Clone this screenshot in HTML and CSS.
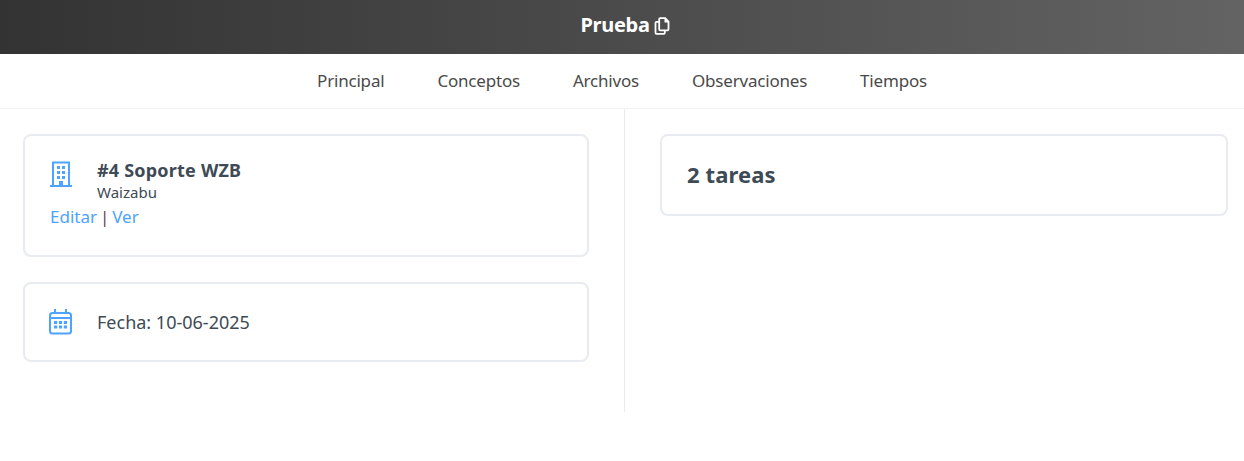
FILE: index.html
```html
<!DOCTYPE html>
<html lang="es">
<head>
    <meta charset="UTF-8">
    <title>Prueba</title>
    <link rel="stylesheet" href="styles.css">
</head>
<body>
    <header class="topbar">
        <span class="topbar-title">Prueba</span>
        <svg class="copy-icon" viewBox="0 0 16 18" width="16" height="18" fill="none" stroke="#fff" stroke-width="1.800">
            <path d="M6.200 1.200h5l3.300 3.300v7.800a1 1 0 0 1-1 1H6.200a1 1 0 0 1-1-1V2.200a1 1 0 0 1 1-1z"/>
            <path fill="#fff" stroke="none" d="M10.500 1.200h1l3 3v1.300h-4z"/>
            <path d="M5.200 4.800H2.500a1 1 0 0 0-1 1v10a1 1 0 0 0 1 1h7.300a1 1 0 0 0 1-1v-2.500"/>
        </svg>
    </header>

    <nav class="tabs">
        <a href="#">Principal</a>
        <a href="#">Conceptos</a>
        <a href="#">Archivos</a>
        <a href="#">Observaciones</a>
        <a href="#">Tiempos</a>
    </nav>

    <main class="content">
        <section class="col col-left">
            <div class="card card-project">
                <div class="card-row">
                    <svg class="card-icon" viewBox="0 0 22 26" width="22" height="26">
                        <path fill="none" stroke="#4da3ff" stroke-width="2" d="M3 25V1.500h16V25M0 25h22"/>
                        <path fill="#4da3ff" d="M7 5h3v3H7zM12 5h3v3h-3zM7 10h3v3H7zM12 10h3v3h-3zM7 15h3v3H7zM12 15h3v3h-3zM9 20h4v5H9z"/>
                    </svg>
                    <div class="project-text">
                        <div class="project-title">#4 Soporte WZB</div>
                        <div class="project-client">Waizabu</div>
                    </div>
                </div>
                <div class="links"><a href="#">Editar</a> | <a href="#">Ver</a></div>
            </div>

            <div class="card card-date">
                <svg class="card-icon" viewBox="0 0 23 26" width="23" height="26">
                    <rect x="1" y="4" width="21" height="20.500" rx="2.500" fill="none" stroke="#4da3ff" stroke-width="2"/>
                    <path fill="none" stroke="#4da3ff" stroke-width="2" d="M1 9h21M6 0v5M17 0v5"/>
                    <path fill="#4da3ff" d="M5 12h3.200v3H5zM9.900 12h3.200v3H9.900zM14.800 12h3.200v3h-3.200zM5 16.500h3.200v3H5zM9.900 16.500h3.200v3H9.900zM14.800 16.500h3.200v3h-3.200z"/>
                </svg>
                <span class="date-text">Fecha: 10-06-2025</span>
            </div>
        </section>

        <section class="col col-right">
            <div class="card card-tasks">
                <h3>2 tareas</h3>
            </div>
        </section>
    </main>
</body>
</html>
```

FILE: styles.css
```css
* {
    box-sizing: border-box;
}

body {
    margin: 0;
    font-family: 'Noto Sans', sans-serif;
    background-color: #fff;
    color: #3e4a55;
}

a {
    text-decoration: none;
}

.topbar {
    height: 54px;
    padding: 0 0 5px 6px;
    background: linear-gradient(90deg, #333333, #636363);
    display: flex;
    align-items: center;
    justify-content: center;
    gap: 4px;
    color: #fff;
}

.topbar-title {
    font-size: 20px;
    font-weight: 700;
    letter-spacing: -0.3px;
}

.copy-icon {
    margin-top: 2px;
}

.tabs {
    height: 55px;
    padding-bottom: 2px;
    border-bottom: 1px solid #f1f2f4;
    display: flex;
    align-items: center;
    justify-content: center;
    gap: 53px;
}

.tabs a {
    font-size: 17px;
    color: #4a4a4a;
    letter-spacing: -0.2px;
}

.content {
    display: grid;
    grid-template-columns: 625px 1fr;
    height: 303px;
}

.col {
    padding: 25px 16px 0 23px;
}

.col-left {
    border-right: 1px solid #e8eaed;
    padding-right: 35px;
}

.col-right {
    padding-left: 35px;
}

.card {
    border: 2px solid #e8ebef;
    border-radius: 8px;
    background: #fff;
}

.card-project {
    height: 123px;
    padding: 25px 25px 0;
    margin-bottom: 25px;
}

.card-row {
    display: flex;
    gap: 25px;
}

.card-icon {
    flex-shrink: 0;
}

.project-text {
    margin-top: -3px;
}

.project-title {
    font-size: 18px;
    font-weight: 700;
    line-height: 24px;
    letter-spacing: 0.2px;
}

.project-client {
    font-size: 15px;
    line-height: 20px;
}

.links {
    font-size: 17px;
    line-height: 24px;
    margin-top: 3px;
    color: #6b3a55;
    word-spacing: -1.5px;
}

.links a {
    color: #4da3ff;
}

.card-date {
    height: 80px;
    padding: 0 25px 0 24px;
    display: flex;
    align-items: center;
    gap: 25px;
}

.date-text {
    font-size: 18px;
}

.card-tasks {
    height: 82px;
    padding: 0 25px 2px;
    display: flex;
    align-items: center;
}

.card-tasks h3 {
    margin: 0;
    font-size: 22px;
    font-weight: 700;
    letter-spacing: 0.1px;
}
```
